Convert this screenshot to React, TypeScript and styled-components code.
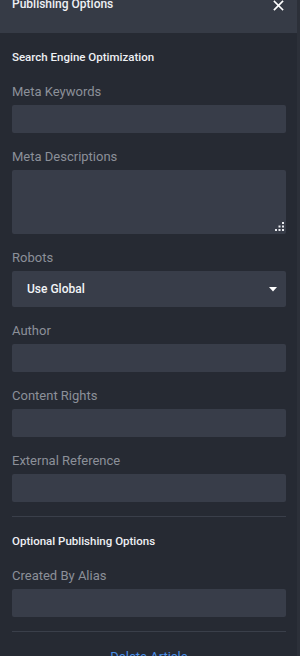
import * as React from "react";
import styled, { createGlobalStyle } from "styled-components";

const GlobalStyle = createGlobalStyle`
  html, body {
    margin: 0;
    padding: 0;
    background: #262a33;
  }
  * {
    box-sizing: border-box;
  }
`;

const Panel = styled.div`
  width: 300px;
  height: 656px;
  overflow: hidden;
  background: #262a33;
  border-right: 3px solid #2c3039;
  font-family: Roboto, "Liberation Sans", sans-serif;
  display: flex;
  flex-direction: column;
`;

const Header = styled.div`
  height: 33px;
  flex: 0 0 auto;
  background: #363b46;
  display: flex;
  align-items: flex-start;
  justify-content: space-between;
  padding: 0 13px 0 12px;
`;

const Title = styled.div`
  margin-top: -4px;
  font-size: 12px;
  line-height: 16px;
  font-weight: 500;
  color: #eef0f4;
`;

const CloseButton = styled.button`
  padding: 0;
  border: 0;
  background: transparent;
  width: 12px;
  height: 11px;
  display: flex;
  align-items: center;
  justify-content: center;
  cursor: pointer;
`;

const Body = styled.div`
  padding: 16px 11px 0 12px;
  display: flex;
  flex-direction: column;
`;

const Section = styled.div`
  display: flex;
  flex-direction: column;
  gap: 16px;
`;

const SectionTitle = styled.div`
  font-size: 11.5px;
  line-height: 16px;
  font-weight: 500;
  color: #eef0f4;
  margin-bottom: 3px;
`;

const Field = styled.label`
  display: flex;
  flex-direction: column;
  gap: 5px;
`;

const Label = styled.span`
  font-size: 13px;
  line-height: 16px;
  color: #8c9099;
`;

const Input = styled.input`
  height: 28px;
  width: 100%;
  border: 0;
  border-radius: 2px;
  background: #383d49;
  color: #eef0f4;
  padding: 0 14px;
  font: inherit;
  font-size: 12px;
  outline: none;
`;

const AreaWrap = styled.div`
  position: relative;
  height: 64px;
`;

const TextArea = styled.textarea`
  display: block;
  height: 64px;
  width: 100%;
  border: 0;
  border-radius: 2px;
  background: #383d49;
  color: #eef0f4;
  padding: 8px 14px;
  font: inherit;
  font-size: 12px;
  resize: none;
  outline: none;
`;

const Grip = styled.svg`
  position: absolute;
  right: 2px;
  bottom: 3px;
`;

const SelectBox = styled.div`
  height: 36px;
  border-radius: 2px;
  background: #383d49;
  display: flex;
  align-items: center;
  justify-content: space-between;
  padding: 0 9px 0 15px;
  color: #f2f4f7;
  font-size: 12px;
  font-weight: 500;
`;

const Divider = styled.div<{ $top: number; $bottom: number }>`
  height: 1px;
  background: #3a3f4a;
  margin: ${(p) => p.$top}px 0 ${(p) => p.$bottom}px 0;
`;

const DeleteLink = styled.a`
  align-self: center;
  font-size: 13px;
  line-height: 16px;
  color: #4a8ee6;
  cursor: pointer;
`;

const TextField: React.FC<{ label: string }> = ({ label }) => (
  <Field>
    <Label>{label}</Label>
    <Input type="text" />
  </Field>
);

export default function App() {
  return (
    <>
      <GlobalStyle />
      <Panel>
        <Header>
          <Title>Publishing Options</Title>
          <CloseButton aria-label="Close">
            <svg width="11" height="11" viewBox="0 0 11 11">
              <path
                d="M1.5 1.5 L9.5 9.5 M9.5 1.5 L1.5 9.5"
                stroke="#ffffff"
                strokeWidth="1.7"
                strokeLinecap="square"
              />
            </svg>
          </CloseButton>
        </Header>
        <Body>
          <Section>
            <SectionTitle>Search Engine Optimization</SectionTitle>
            <TextField label="Meta Keywords" />
            <Field>
              <Label>Meta Descriptions</Label>
              <AreaWrap>
                <TextArea />
                <Grip width="9" height="9" viewBox="0 0 9 9">
                  <g fill="#e8eaee">
                    <rect x="7" y="0" width="2" height="2" />
                    <rect x="7" y="3.5" width="2" height="2" />
                    <rect x="3.5" y="3.5" width="2" height="2" />
                    <rect x="7" y="7" width="2" height="2" />
                    <rect x="3.5" y="7" width="2" height="2" />
                    <rect x="0" y="7" width="2" height="2" />
                  </g>
                </Grip>
              </AreaWrap>
            </Field>
            <Field>
              <Label>Robots</Label>
              <SelectBox>
                <span>Use Global</span>
                <svg width="8" height="5" viewBox="0 0 8 5">
                  <path d="M0 0 H8 L4 4.5 Z" fill="#ffffff" />
                </svg>
              </SelectBox>
            </Field>
            <TextField label="Author" />
            <TextField label="Content Rights" />
            <TextField label="External Reference" />
          </Section>
          <Divider $top={14} $bottom={16} />
          <Section>
            <SectionTitle>Optional Publishing Options</SectionTitle>
            <TextField label="Created By Alias" />
          </Section>
          <Divider $top={14} $bottom={17} />
          <DeleteLink>Delete Article</DeleteLink>
        </Body>
      </Panel>
    </>
  );
}
